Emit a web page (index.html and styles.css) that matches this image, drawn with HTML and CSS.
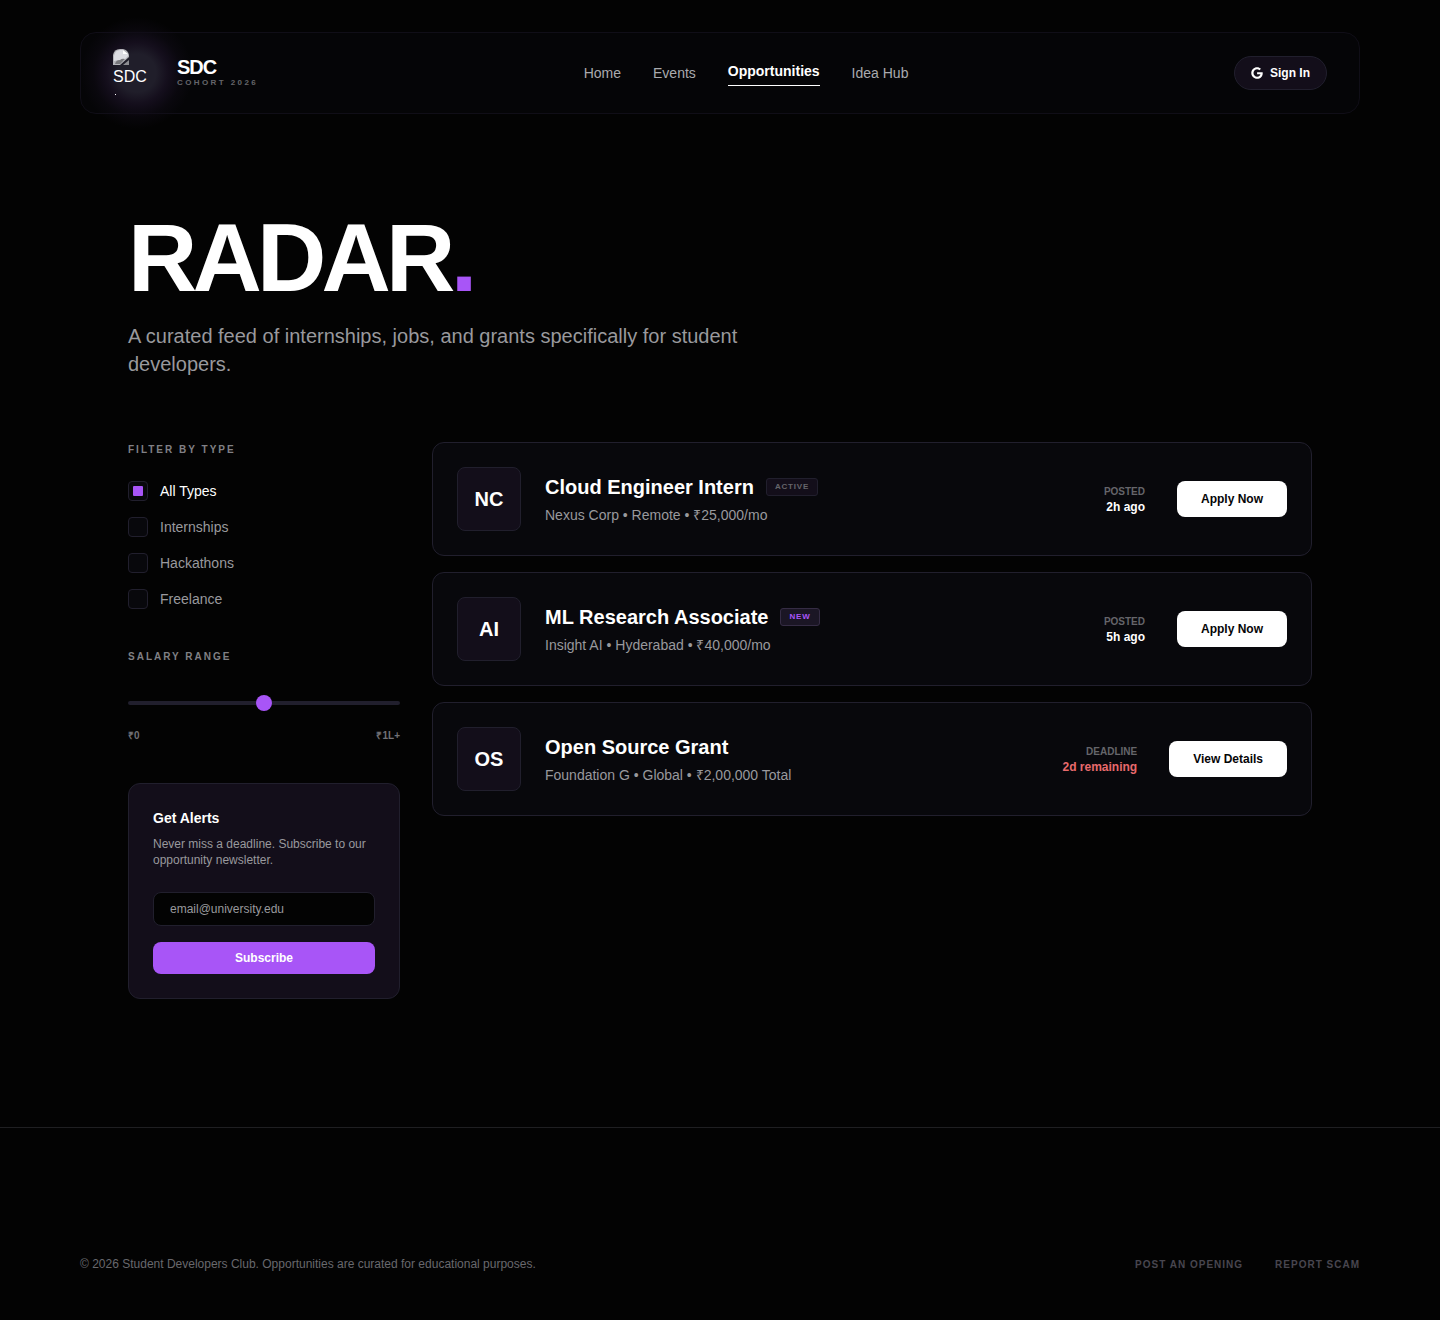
FILE: index.html
```html
<!DOCTYPE html>
<html lang="en">
<head>
    <meta charset="UTF-8">
    <meta name="viewport" content="width=device-width, initial-scale=1.0">
    <title>Radar | SDC</title>
    <link rel="stylesheet" href="styles.css">
</head>
<body>

    <header class="navbar">
        <a href="#" class="brand">
            <span class="brand-logo">
                <svg width="48" height="48" viewBox="0 0 48 48" aria-hidden="true">
                    <path d="M0 16V6Q1 0 7 0h3q5 1 6 6v2l-9 8z" fill="#b4b4b9"/>
                    <path d="M1 12V7q1-6 6-6h3v4h5v2l-5 5-5-1z" fill="#dcdce2"/>
                    <path d="M2 15q1-4 5-4 2-2 5-1l-5 5z" fill="#77777b"/>
                    <path d="M10 1v4h5z" fill="#fff"/>
                    <path d="M16 11v5h-6z" fill="#8d8d92"/>
                    <text x="0" y="33" class="brand-alt">SDC</text>
                    <rect x="2" y="45" width="1" height="1" fill="#fff"/>
                </svg>
            </span>
            <span class="brand-text">
                <span class="brand-name">SDC</span>
                <span class="brand-cohort">COHORT 2026</span>
            </span>
        </a>
        <nav class="nav-links">
            <a href="#">Home</a>
            <a href="#">Events</a>
            <a href="#" class="active">Opportunities</a>
            <a href="#">Idea Hub</a>
        </nav>
        <button class="sign-in">
            <svg width="12" height="12" viewBox="0 0 488 512" aria-hidden="true">
                <path fill="currentColor" d="M488 261.8C488 403.3 391.1 504 248 504 110.8 504 0 393.2 0 256S110.8 8 248 8c66.8 0 123 24.5 166.3 64.9l-67.5 64.9C258.5 52.6 94.3 116.6 94.3 256c0 86.5 69.1 156.6 153.7 156.6 98.2 0 135-70.4 140.8-106.9H248v-85.3h236.1c2.3 12.7 3.9 24.9 3.9 41.4z"/>
            </svg>
            Sign In
        </button>
    </header>

    <main>
        <section class="hero">
            <h1>RADAR<span class="dot">.</span></h1>
            <p>A curated feed of internships, jobs, and grants specifically for student developers.</p>
        </section>

        <div class="content">
            <aside class="sidebar">
                <fieldset class="filters">
                    <legend class="section-label">FILTER BY TYPE</legend>
                    <label class="filter"><input type="checkbox" checked><span>All Types</span></label>
                    <label class="filter"><input type="checkbox"><span>Internships</span></label>
                    <label class="filter"><input type="checkbox"><span>Hackathons</span></label>
                    <label class="filter"><input type="checkbox"><span>Freelance</span></label>
                </fieldset>

                <div class="salary">
                    <label for="salary-range" class="section-label">SALARY RANGE</label>
                    <input type="range" id="salary-range" min="0" max="100" value="50">
                    <div class="salary-limits">
                        <span>₹0</span>
                        <span>₹1L+</span>
                    </div>
                </div>

                <form class="alerts">
                    <h2>Get Alerts</h2>
                    <p>Never miss a deadline. Subscribe to our opportunity newsletter.</p>
                    <input type="email" aria-label="Email" placeholder="email@university.edu">
                    <button type="button">Subscribe</button>
                </form>
            </aside>

            <section class="jobs">
                <article class="job">
                    <div class="job-logo">NC</div>
                    <div class="job-info">
                        <div class="job-title">
                            <h3>Cloud Engineer Intern</h3>
                            <span class="badge">ACTIVE</span>
                        </div>
                        <p>Nexus Corp • Remote • ₹25,000/mo</p>
                    </div>
                    <div class="job-date">
                        <span>POSTED</span>
                        <strong>2h ago</strong>
                    </div>
                    <button class="job-button">Apply Now</button>
                </article>

                <article class="job">
                    <div class="job-logo">AI</div>
                    <div class="job-info">
                        <div class="job-title">
                            <h3>ML Research Associate</h3>
                            <span class="badge badge-new">NEW</span>
                        </div>
                        <p>Insight AI • Hyderabad • ₹40,000/mo</p>
                    </div>
                    <div class="job-date">
                        <span>POSTED</span>
                        <strong>5h ago</strong>
                    </div>
                    <button class="job-button">Apply Now</button>
                </article>

                <article class="job">
                    <div class="job-logo">OS</div>
                    <div class="job-info">
                        <div class="job-title">
                            <h3>Open Source Grant</h3>
                        </div>
                        <p>Foundation G • Global • ₹2,00,000 Total</p>
                    </div>
                    <div class="job-date urgent">
                        <span>DEADLINE</span>
                        <strong>2d remaining</strong>
                    </div>
                    <button class="job-button">View Details</button>
                </article>
            </section>
        </div>
    </main>

    <footer>
        <div class="footer-inner">
            <p>© 2026 Student Developers Club. Opportunities are curated for educational purposes.</p>
            <div class="footer-links">
                <a href="#">POST AN OPENING</a>
                <a href="#">REPORT SCAM</a>
            </div>
        </div>
    </footer>

</body>
</html>
```
FILE: styles.css
```css
:root {
    --bg: #030303;
    --card: #08080c;
    --panel: #130e1a;
    --border: #211f2d;
    --accent: #a855f7;
    --muted: #99999d;
    --dim: #65656a;
}

* {
    box-sizing: border-box;
    margin: 0;
    padding: 0;
}

body {
    background: var(--bg);
    color: #fff;
    font-family: "Liberation Sans", Arial, sans-serif;
    font-size: 14px;
    line-height: 20px;
    padding-top: 32px;
}

a {
    color: inherit;
    text-decoration: none;
}

button, input {
    font-family: inherit;
}

button {
    border: none;
    cursor: pointer;
    font-size: 12px;
    font-weight: bold;
    line-height: 16px;
}

/* Navbar */
.navbar {
    display: flex;
    justify-content: space-between;
    align-items: center;
    max-width: 1280px;
    margin: 0 auto;
    padding: 16px 32px;
    background: #050507;
    border: 1px solid #100e17;
    border-radius: 16px;
}

.brand {
    display: flex;
    align-items: center;
    gap: 16px;
}

.brand-logo {
    position: relative;
    width: 48px;
    height: 48px;
}

/* Glow behind the logo */
.brand-logo::before {
    content: "";
    position: absolute;
    inset: -32px;
    background: radial-gradient(closest-side, #201e2a 34%, #150f1d 54%, #110c18 62%, rgba(17, 12, 24, 0.4) 78%, transparent);
}

.brand-logo svg {
    display: block;
    position: relative;
}

.brand-alt {
    fill: #fff;
    font-size: 16px;
}

.brand-text {
    position: relative;
    display: flex;
    flex-direction: column;
}

.brand-name {
    font-size: 20px;
    font-weight: bold;
    line-height: 20px;
    letter-spacing: -1px;
}

.brand-cohort {
    color: var(--dim);
    font-size: 8px;
    font-weight: bold;
    line-height: 12px;
    letter-spacing: 0.3em;
}

.nav-links {
    display: flex;
    align-items: center;
    gap: 32px;
    color: #aaaaae;
}

.nav-links .active {
    color: #fff;
    font-weight: bold;
    padding-bottom: 4px;
    border-bottom: 1px solid #fff;
}

.sign-in {
    display: flex;
    align-items: center;
    gap: 7px;
    padding: 8px 16px;
    color: #fff;
    background: var(--panel);
    border: 1px solid var(--border);
    border-radius: 17px;
}

/* Hero */
main {
    max-width: 1280px;
    margin: 0 auto;
    padding: 96px 48px 128px;
}

.hero {
    margin-bottom: 64px;
}

.hero h1 {
    font-size: 96px;
    line-height: 96px;
    letter-spacing: -0.05em;
    margin-bottom: 16px;
}

.hero .dot {
    color: var(--accent);
}

.hero p {
    max-width: 672px;
    color: var(--muted);
    font-size: 20px;
    line-height: 28px;
}

.content {
    display: grid;
    grid-template-columns: repeat(12, 1fr);
    gap: 32px;
    align-items: start;
}

/* Sidebar */
.sidebar {
    grid-column: span 3;
    display: flex;
    flex-direction: column;
    gap: 40px;
}

.section-label {
    display: block;
    color: #808085;
    font-size: 10px;
    font-weight: bold;
    line-height: 15px;
    letter-spacing: 2px;
}

.filters {
    display: flex;
    flex-direction: column;
    gap: 16px;
    border: none;
}

.filters legend {
    margin-bottom: 24px;
}

.filter {
    display: flex;
    align-items: center;
    gap: 12px;
    color: var(--muted);
    cursor: pointer;
}

.filter:has(input:checked) {
    color: #fff;
}

.filter input {
    appearance: none;
    display: grid;
    place-items: center;
    width: 20px;
    height: 20px;
    background: var(--card);
    border: 1px solid var(--border);
    border-radius: 4px;
}

.filter input:checked::before {
    content: "";
    width: 10px;
    height: 10px;
    background: var(--accent);
    border-radius: 1px;
}

.salary input {
    appearance: none;
    display: block;
    width: 100%;
    height: 16px;
    margin: 31px 0 17px;
    background: transparent;
}

.salary input::-webkit-slider-runnable-track {
    height: 4px;
    background: var(--border);
    border-radius: 2px;
}

.salary input::-webkit-slider-thumb {
    appearance: none;
    width: 16px;
    height: 16px;
    margin-top: -6px;
    background: var(--accent);
    border-radius: 50%;
}

.salary-limits {
    display: flex;
    justify-content: space-between;
    color: #717176;
    font-size: 10px;
    font-weight: bold;
    line-height: 15px;
}

.alerts {
    display: flex;
    flex-direction: column;
    padding: 24px;
    background: var(--panel);
    border: 1px solid var(--border);
    border-radius: 12px;
}

.alerts h2 {
    font-size: 14px;
    line-height: 20px;
    margin-bottom: 8px;
}

.alerts p {
    color: var(--muted);
    font-size: 12px;
    line-height: 16px;
    margin-bottom: 24px;
}

.alerts input {
    width: 100%;
    height: 34px;
    padding: 8px 16px;
    margin-bottom: 16px;
    color: #fff;
    background: var(--bg);
    border: 1px solid var(--border);
    border-radius: 8px;
    font-size: 12px;
}

.alerts input::placeholder {
    color: var(--muted);
}

.alerts button {
    padding: 8px;
    color: #fff;
    background: var(--accent);
    border-radius: 8px;
}

/* Job list */
.jobs {
    grid-column: span 9;
    display: flex;
    flex-direction: column;
    gap: 16px;
}

.job {
    display: flex;
    align-items: center;
    padding: 24px;
    background: var(--card);
    border: 1px solid var(--border);
    border-radius: 12px;
}

.job-logo {
    display: flex;
    align-items: center;
    justify-content: center;
    width: 64px;
    height: 64px;
    margin-right: 24px;
    background: var(--panel);
    border: 1px solid var(--border);
    border-radius: 8px;
    font-size: 20px;
    font-weight: bold;
}

.job-info {
    flex: 1;
}

.job-title {
    display: flex;
    align-items: center;
    gap: 12px;
    margin-bottom: 4px;
}

.job-title h3 {
    font-size: 20px;
    line-height: 28px;
}

.job-info p {
    color: var(--muted);
}

.badge {
    padding: 2px 8px;
    color: var(--dim);
    background: var(--panel);
    border: 1px solid var(--border);
    border-radius: 3px;
    font-size: 8px;
    font-weight: bold;
    line-height: 12px;
    letter-spacing: 0.1em;
}

.badge-new {
    color: var(--accent);
    background: #1b1625;
    border-color: #352c44;
}

.job-date {
    display: flex;
    flex-direction: column;
    text-align: right;
    margin-right: 32px;
}

.job-date span {
    color: #65656a;
    font-size: 10px;
    font-weight: bold;
    line-height: 15px;
}

.job-date strong {
    font-size: 12px;
    line-height: 16px;
}

.job-date.urgent strong {
    color: #e86a6c;
}

.job-button {
    padding: 10px 24px;
    color: #050507;
    background: #fff;
    border-radius: 8px;
}

/* Footer */
footer {
    padding: 128px 48px 48px;
    border-top: 1px solid #1f1f22;
}

.footer-inner {
    display: flex;
    justify-content: space-between;
    align-items: baseline;
    max-width: 1280px;
    margin: 0 auto;
    color: #68686d;
    font-size: 12px;
    line-height: 16px;
}

.footer-links {
    display: flex;
    gap: 32px;
    color: #48464f;
    font-size: 10px;
    font-weight: bold;
    line-height: 15px;
    letter-spacing: 1px;
}
```
